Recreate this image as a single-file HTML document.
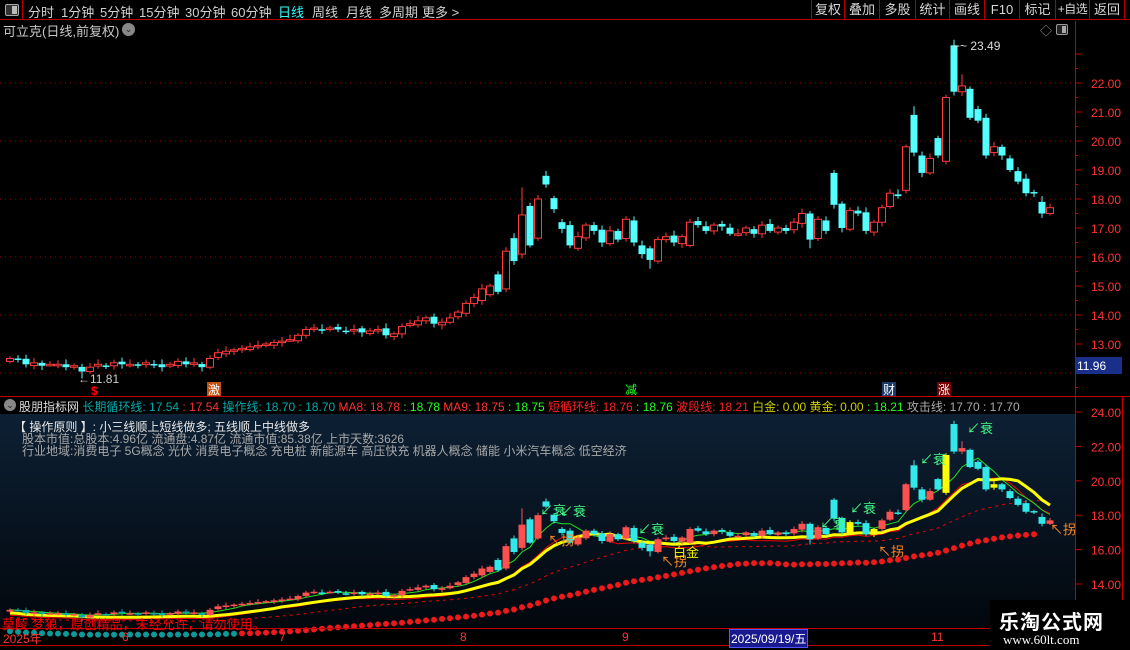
<!DOCTYPE html>
<html><head><meta charset="utf-8">
<style>
*{margin:0;padding:0;box-sizing:border-box}
html,body{width:1130px;height:650px;background:#000;overflow:hidden;font-family:"Liberation Sans","Noto Sans CJK SC",sans-serif;font-size:12px;color:#c8c8c8}
.abs{position:absolute;white-space:nowrap}
#top{position:absolute;left:0;top:0;width:1130px;height:20px;border-bottom:1px solid #b00000}
.m{position:absolute;top:2px;font-size:13px;color:#d0d0d0;white-space:nowrap}
.btn{position:absolute;top:0;height:20px;border-left:1px solid #b00000;font-size:13px;color:#d8d8d8;text-align:center;line-height:19px;white-space:nowrap;overflow:hidden}
</style></head><body>
<div id="top">
  <div class="abs" style="left:0;top:0;width:23px;height:20px;border-right:1px solid #b00000"></div>
  <div class="abs" style="left:5px;top:4px;width:14px;height:12px;border:1px solid #aaa;border-radius:2px;background:#333"><div style="position:absolute;right:1px;top:1px;width:5px;height:8px;background:#bbb"></div></div>
  <span class="m" style="left:28px">分时</span><span class="m" style="left:61px">1分钟</span><span class="m" style="left:100px">5分钟</span><span class="m" style="left:139px">15分钟</span><span class="m" style="left:185px">30分钟</span><span class="m" style="left:231px">60分钟</span><span class="m" style="left:278px;color:#3ff">日线</span><span class="m" style="left:312px">周线</span><span class="m" style="left:346px">月线</span><span class="m" style="left:379px">多周期</span><span class="m" style="left:422px">更多 &gt;</span>
  <div class="btn" style="left:811px;width:33px">复权</div><div class="btn" style="left:844px;width:35px">叠加</div><div class="btn" style="left:879px;width:36px">多股</div><div class="btn" style="left:915px;width:34px">统计</div><div class="btn" style="left:949px;width:35px">画线</div><div class="btn" style="left:984px;width:35px">F10</div><div class="btn" style="left:1019px;width:36px">标记</div><div class="btn" style="left:1055px;width:34px;font-size:12px;letter-spacing:-0.5px">+自选</div><div class="btn" style="left:1089px;width:36px;border-right:1px solid #b00000">返回</div>
</div>
<div class="abs" style="left:3px;top:21px;font-size:13px;color:#c8c8c8">可立克(日线,前复权)</div>
<div class="abs" style="left:122px;top:23px;width:13px;height:13px;border-radius:50%;background:#888;color:#222;font-size:9px;text-align:center;line-height:13px">⌄</div>
<div class="abs" style="left:1040px;top:22px;color:#999;font-size:12px">◇</div>
<div class="abs" style="left:1056px;top:24px;width:12px;height:11px;border:1px solid #999;border-radius:2px;background:#222"><div style="position:absolute;right:1px;top:1px;width:4px;height:7px;background:#aaa"></div></div>

<svg id="sv" width="1130" height="650" style="position:absolute;left:0;top:0" xmlns="http://www.w3.org/2000/svg">
<defs><linearGradient id="bg" x1="0" y1="0" x2="0" y2="1"><stop offset="0" stop-color="#0d2034"/><stop offset="1" stop-color="#02070d"/></linearGradient></defs>
<rect x="0" y="414" width="1075" height="214" fill="url(#bg)"/>
<g id="g"></g>
</svg>

<div class="abs" style="left:0;top:396px;width:1130px;height:1px;background:#c00000"></div>
<div class="abs" style="left:1075px;top:21px;width:1px;height:629px;background:#c00000"></div>
<div class="abs" style="left:1122px;top:396px;width:1px;height:232px;background:#c00000"></div>
<div class="abs" style="left:0;top:628px;width:990px;height:1px;background:#c00000"></div>
<div class="abs" style="left:0;top:645px;width:990px;height:1px;background:#c00000"></div>

<div class="abs" style="left:4px;top:399px;width:12px;height:12px;border-radius:50%;background:#888;color:#222;font-size:9px;text-align:center;line-height:12px">⌄</div>
<div class="abs" style="left:19px;top:398px;font-size:12px">
<span style="color:#ddd">股朋指标网</span>
<span style="color:#0aa">长期循环线: 17.54</span><span style="color:#f33"> : 17.54</span>
<span style="color:#0aa">操作线: 18.70 : 18.70</span>
<span style="color:#f33">MA8: 18.78</span><span style="color:#2f2"> : 18.78</span>
<span style="color:#f33">MA9: 18.75</span><span style="color:#2f2"> : 18.75</span>
<span style="color:#f22">短循环线: 18.76</span><span style="color:#2f2"> : 18.76</span>
<span style="color:#f22">波段线: 18.21</span>
<span style="color:#cc0">白金: 0.00</span>
<span style="color:#cc0">黄金: 0.00</span><span style="color:#2f2"> : 18.21</span>
<span style="color:#aaa">攻击线: 17.70 : 17.70</span>
</div>
<div class="abs" style="left:14px;top:418px;color:#e8e8e8">【 操作原则 】: 小三线顺上短线做多; 五线顺上中线做多</div>
<div class="abs" style="left:22px;top:430px;color:#a8a8a8">股本市值:总股本:4.96亿 流通盘:4.87亿 流通市值:85.38亿 上市天数:3626</div>
<div class="abs" style="left:22px;top:442px;color:#a8a8a8">行业地域:消费电子 5G概念 光伏 消费电子概念 充电桩 新能源车 高压快充 机器人概念 储能 小米汽车概念 低空经济</div>
<div class="abs" style="left:2px;top:614px;color:#f00;font-size:13px">莫陵 梦狼，原创精品，未经允许，请勿使用。</div>

<div class="abs" style="left:3px;top:630px;color:#f33">2025年</div>
<div class="abs" style="left:122px;top:630px;color:#f33">6</div>
<div class="abs" style="left:279px;top:630px;color:#f33">7</div>
<div class="abs" style="left:460px;top:630px;color:#f33">8</div>
<div class="abs" style="left:622px;top:630px;color:#f33">9</div>
<div class="abs" style="left:729px;top:629px;background:#1a1a90;color:#fff;padding:0 1px;border:1px solid #55f">2025/09/19/五</div>
<div class="abs" style="left:931px;top:630px;color:#f33">11</div>

<div class="abs" style="left:990px;top:600px;width:140px;height:50px;background:#000"></div>
<div class="abs" style="left:999px;top:606px;color:#fff;font-size:20px;font-weight:bold;letter-spacing:1px">乐淘公式网</div>
<div class="abs" style="left:1003px;top:632px;color:#fff;font-size:13px;font-family:'Liberation Serif',serif">www.60lt.com</div>

<script>
const C=[12.5,12.45,12.3,12.35,12.25,12.3,12.3,12.2,12.25,12.05,12.2,12.3,12.25,12.35,12.3,12.3,12.25,12.35,12.3,12.2,12.3,12.4,12.3,12.35,12.2,
12.5,12.7,12.75,12.8,12.85,12.9,12.95,13.0,13.05,13.1,13.15,13.3,
13.5,13.55,13.5,13.55,13.5,13.45,13.5,13.4,13.45,13.5,13.3,13.35,13.6,13.7,13.8,13.9,13.7,13.75,13.9,14.1,
14.4,14.6,14.9,15.0,14.8,
16.2,15.86,17.45,16.4,18.0,18.5,17.65,16.97,16.4,16.7,
17.1,16.9,16.5,16.9,16.6,17.3,16.5,16.1,15.9,16.6,16.7,16.5,16.7,17.2,17.1,16.9,17.1,17.05,16.8,16.8,17.0,16.8,17.1,16.9,17.0,16.9,17.2,17.5,16.6,17.3,16.9,
17.8,17.0,17.6,17.5,16.9,17.2,17.7,18.2,18.1,19.8,19.6,18.9,19.4,19.5,21.5,21.7,21.9,20.8,20.7,19.5,19.8,19.5,19.0,18.6,18.2,18.2,17.5,17.7];
const O={59:14.5,60:14.7,61:15.4,62:14.9,63:16.65,64:16.1,65:17.76,66:16.65,67:18.8,68:18.03,69:17.2,70:17.1,71:16.3,79:16.4,80:16.3,85:16.4,103:18.9,112:18.3,113:20.9,114:19.5,115:18.9,116:20.1,117:19.3,118:23.3,119:21.7,120:21.8,121:21.1,122:20.8,123:19.6,125:19.4,127:18.7,129:17.9};
const H={118:23.49,67:18.97,103:19.0,119:22.3,113:21.2,117:21.6,64:18.4,129:18.1};
const L={9:11.81,100:16.3,80:15.6,70:16.3};
let s='';
const X=i=>10+8*i, Y=p=>83+(22-p)*29, Y2=p=>412+(24-p)*17.2;
function sma(n){return C.map((v,i)=>{let a=0,k=0;for(let j=Math.max(0,i-n+1);j<=i;j++){a+=C[j];k++}return a/k})}
[22,20,18,16,14,12].forEach(p=>{s+=`<line x1="0" x2="1075" y1="${Y(p)}" y2="${Y(p)}" stroke="#900" stroke-dasharray="1,4"/>`});
for(let p=23;p>=12;p--){let y=Y(p);s+=`<line x1="1075" x2="1081" y1="${y}" y2="${y}" stroke="#c00"/>`;s+=`<line x1="1075" x2="1078" y1="${y+14.5}" y2="${y+14.5}" stroke="#c00"/>`;if(p<=22&&p>=13)s+=`<text x="1091" y="${y+5}" fill="#f33" font-size="12">${p}.00</text>`}
s+=`<rect x="1076" y="357" width="46" height="17" fill="#1a2f8a"/><text x="1077" y="370" fill="#fff" font-size="12">11.96</text>`;
[24,22,20,18,16,14].forEach(p=>{let y=Y2(p);s+=`<line x1="1075" x2="1081" y1="${y}" y2="${y}" stroke="#c00"/><text x="1091" y="${y+5}" fill="#f33" font-size="12">${p}.00</text>`});
function cand(i,yf,lower){
 let c=C[i],o=O[i]!==undefined?O[i]:(i?C[i-1]+((i%3)-1)*0.04:c-0.1);
 let hi=H[i]||Math.max(o,c)+0.08+(i%4)*0.03, lo=L[i]||Math.min(o,c)-0.07-(i%5)*0.02;
 let x=X(i),up=c>=o,t=yf(Math.max(o,c)),b=yf(Math.min(o,c));if(b-t<1.5){b=t+1.5}
 let col=up?'#ff3a3a':'#54ffff';
 if(lower){col=up?(i>100&&i%3==0?'#ff0':'#ff5050'):(i<30?'#11aaaa':'#33e8e8');}
 s+=`<line x1="${x}" x2="${x}" y1="${yf(hi)}" y2="${yf(lo)}" stroke="${col}"/>`;
 if(up&&!lower)s+=`<rect x="${x-3.5}" y="${t}" width="7" height="${b-t}" fill="#000" stroke="${col}"/>`;
 else s+=`<rect x="${x-3.5}" y="${t}" width="7" height="${b-t}" fill="${col}"/>`;
}
for(let i=0;i<C.length;i++)cand(i,Y,false);
function path(arr,yf,st){let d='';arr.forEach((v,i)=>{d+=(i?'L':'M')+X(i)+','+yf(v).toFixed(1)});s+=`<path d="${d}" fill="none" ${st}/>`}
const m20=sma(20),m8=sma(8),m5=sma(5),m30=sma(30),m10=sma(10);
path(m20.map(v=>v*0.965),Y2,'stroke="#e00" stroke-width="1" stroke-dasharray="3,4"');
path(m8.map(v=>v*0.975),Y2,'stroke="#e00" stroke-width="1"');
path(m5,Y2,'stroke="#2d2" stroke-width="1"');
path(m10.map(v=>v*0.985),Y2,'stroke="#ff0" stroke-width="3"');
for(let i=0;i<C.length;i++){let v=m30[i]*0.9,y=Y2(v);if(i>C.length-3)continue;s+=`<circle cx="${X(i)}" cy="${y.toFixed(1)}" r="3" fill="${i<29?'#0a9a9a':'#f01818'}"/>`}
for(let i=0;i<C.length;i++)cand(i,Y2,true);
s+=`<text x="953" y="50" fill="#ddd" font-size="12">⌐~ 23.49</text>`;
s+=`<text x="78" y="383" fill="#ccc" font-size="12">←11.81</text>`;
s+=`<text x="91" y="395" fill="#f00" font-size="12" font-weight="bold">$</text>`;
s+=`<rect x="207" y="382" width="14" height="14" fill="#c05010"/><text x="208" y="394" fill="#fff" font-size="12">激</text>`;
s+=`<text x="625" y="394" fill="#2f2" font-size="12">减</text>`;
s+=`<rect x="882" y="382" width="14" height="14" fill="#1a3a6a"/><text x="883" y="394" fill="#fff" font-size="12">财</text>`;
s+=`<rect x="937" y="382" width="14" height="14" fill="#700"/><text x="938" y="394" fill="#fff" font-size="12">涨</text>`;
[[540,515],[560,516],[638,534],[820,528],[850,513],[920,464],[967,433]].forEach(a=>{s+=`<text x="${a[0]}" y="${a[1]}" fill="#4f8" font-size="13">↙衰</text>`});
[[548,545],[661,566],[878,556],[1050,534]].forEach(a=>{s+=`<text x="${a[0]}" y="${a[1]}" fill="#f82" font-size="13">↖拐</text>`});
s+=`<text x="673" y="557" fill="#ee0" font-size="13">白金</text>`;
document.getElementById('g').innerHTML=s;
</script>
</body></html>
